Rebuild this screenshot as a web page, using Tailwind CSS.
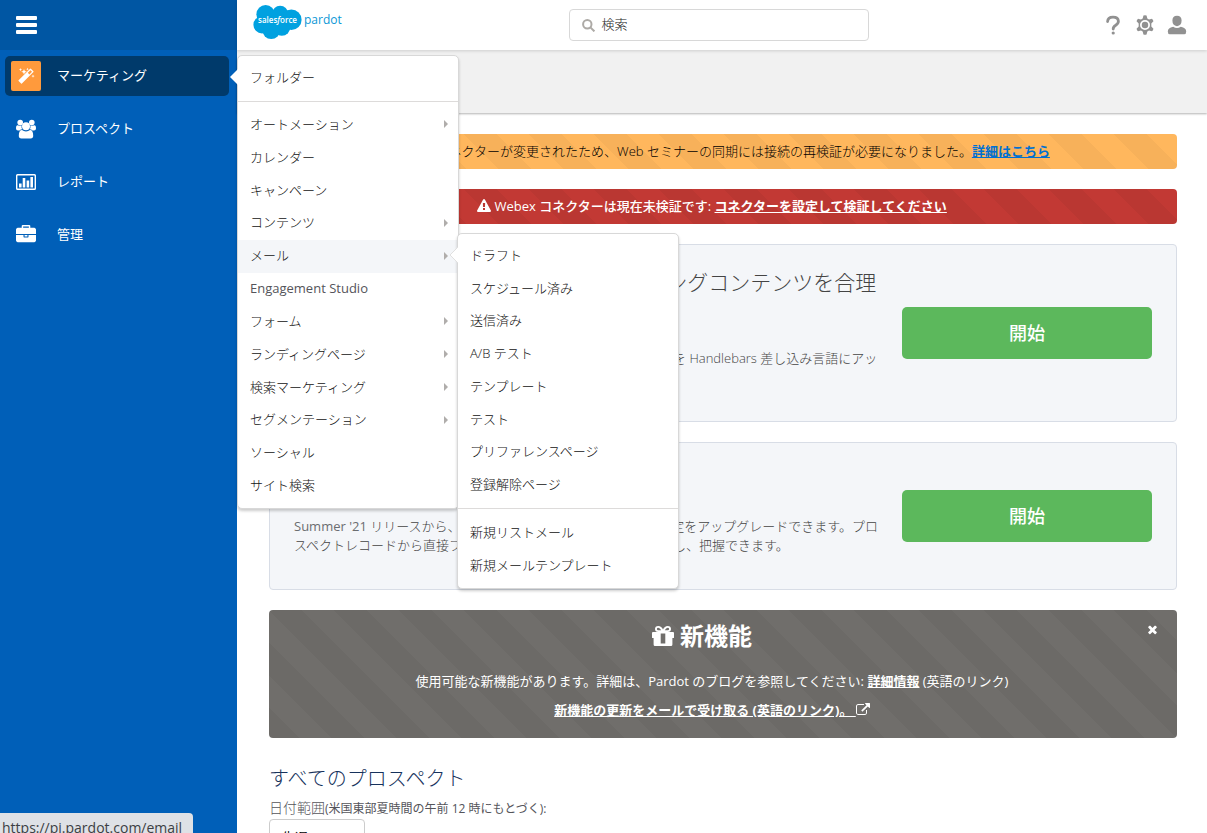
<!DOCTYPE html>
<html lang="ja">
<head>
<meta charset="utf-8">
<meta name="viewport" content="width=device-width, initial-scale=1">
<title>Pardot</title>
<script src="https://cdn.jsdelivr.net/npm/@tailwindcss/browser@4"></script>
</head>
<body class="relative flex h-screen overflow-hidden bg-white font-['Open_Sans','Noto_Sans_CJK_JP',sans-serif] text-[13px] leading-[19px] text-[#3e3e3c]">

<!-- Sidebar -->
<nav class="flex w-[237px] shrink-0 flex-col bg-[#005fb8] text-white" aria-label="メイン">
  <div class="flex h-[50px] items-center bg-[#0056a3] pl-4">
    <button type="button" aria-label="メニュー">
      <svg class="h-[18px] w-[21px]" viewBox="0 0 21 18" fill="currentColor"><rect width="21" height="4" rx="1"/><rect y="7" width="21" height="4" rx="1"/><rect y="14" width="21" height="4" rx="1"/></svg>
    </button>
  </div>
  <ul class="flex flex-col gap-[13px] py-1.5 pr-2 pl-[5px] [&_b]:pb-0.5 [&_b]:font-normal">
    <li><a href="#" class="flex h-10 items-center gap-4 rounded-[5px] bg-[#003a6b] pl-1.5">
      <span class="flex size-[30px] items-center justify-center rounded-xs bg-[#ff9a3c]">
        <svg class="h-[18px] w-[18px]" viewBox="0 0 18 18" fill="currentColor"><path fill-rule="evenodd" d="M13.9 1.800 16.400 4.300Q16.800 4.700 16.400 5.100L4.900 16.600Q4.500 17 4.100 16.600L1.600 14.100Q1.200 13.700 1.600 13.300L13.100 1.800Q13.500 1.400 13.900 1.800zM13.400 3.200 10.800 5.800 12.400 7.400 15 4.800z"/><path d="M3.500 1l.5 1.200 1.200.4-1.200.5-.5 1.200-.5-1.200-1.200-.5L3 2.200zM7 2l.8 2 2 .8-2 .8L7 7.500l-.8-1.900-2-.8 2-.8zM10.500.8l.4 1 1 .4-1 .4-.4 1-.4-1-1-.4 1-.4zM16 7.500l.5 1.200 1.200.4-1.200.5-.5 1.200-.5-1.200-1.200-.5 1.200-.4z"/></svg>
      </span>
      <b>マーケティング</b></a></li>
    <li><a href="#" class="flex h-10 items-center gap-[21px] pl-[11px]">
      <svg class="h-5 w-5" viewBox="0 0 20 20" fill="currentColor"><circle cx="4.200" cy="3.600" r="2.800"/><circle cx="15.800" cy="3.600" r="2.800"/><path d="M0 9.500Q0 6.300 1.600 6.300L4 7.100 5.600 6.600Q5.200 9 6.300 10.200 4.600 10.300 3.600 11.400H2Q0 11.400 0 9.500zM20 9.500Q20 6.300 18.400 6.300L16 7.100 14.400 6.600Q14.800 9 13.700 10.200 15.400 10.300 16.400 11.400H18Q20 11.400 20 9.500z"/><circle cx="10" cy="7.200" r="4"/><path d="M2.800 16.800Q2.800 11 6 11 7.700 12.400 10 12.400T14 11Q17.200 11 17.200 16.800 17.200 19.400 14.600 19.400H5.400Q2.800 19.400 2.800 16.800z"/></svg>
      <b>プロスペクト</b></a></li>
    <li><a href="#" class="flex h-10 items-center gap-[21px] pl-[11px]">
      <svg class="h-5 w-5" viewBox="0 0 20 20" fill="currentColor"><path fill-rule="evenodd" d="M1.500 2h17Q20 2 20 3.500v13q0 1.500-1.500 1.500h-17Q0 18 0 16.500v-13Q0 2 1.500 2zm.3 1.400q-.4 0-.4.400v12.400q0 .4.400.4h16.400q.4 0 .4-.4V3.800q0-.4-.4-.4z"/><path d="M3 11.500h2.600V15.500H3zM6.700 6h2.600v9.500H6.700zM10.600 8.500h2.600v7h-2.600zM14.400 5H17v10.500h-2.600z"/></svg>
      <b>レポート</b></a></li>
    <li><a href="#" class="flex h-10 items-center gap-[21px] pl-[11px]">
      <svg class="h-5 w-5" viewBox="0 0 1792 1792" fill="currentColor"><path d="M640 256h512v-128h-512v128zm1152 640v480q0 66-47 113t-113 47h-1472q-66 0-113-47t-47-113v-480h672v160q0 26 19 45t45 19h320q26 0 45-19t19-45v-160h672zm-768 0v128h-256v-128h256zm768-480v384h-1792v-384q0-66 47-113t113-47h352v-160q0-40 28-68t68-28h576q40 0 68 28t28 68v160h352q66 0 113 47t47 113z"/></svg>
      <b>管理</b></a></li>
  </ul>
</nav>

<div class="flex min-w-0 flex-1 flex-col">
  <!-- Top bar -->
  <header class="relative z-10 flex h-[50px] shrink-0 items-center justify-between bg-white pr-5 pl-4 shadow-[0_1px_3px_rgba(0,0,0,0.15)]">
    <a href="#" class="flex h-full gap-[2px] pt-[5px]" aria-label="salesforce pardot">
      <span class="relative flex h-[34px] w-[49px] items-center justify-center">
        <svg class="absolute inset-0 h-full w-full" viewBox="0 0 146 103" fill="#00a1e0"><circle cx="37" cy="28" r="28"/><circle cx="81" cy="26" r="24"/><circle cx="115" cy="45" r="31"/><circle cx="26" cy="60" r="26"/><circle cx="54" cy="76" r="27"/><circle cx="86" cy="67" r="26"/><path d="M30 25h70v45H30z"/></svg>
        <span class="relative -mt-1 text-[8px] leading-3 font-semibold text-white">sales<i>f</i>orce</span>
      </span>
      <span class="pt-[7px] text-[12px] leading-4 text-[#0c97d6]">pardot</span>
    </a>
    <label class="flex h-8 w-[300px] items-center gap-1.5 rounded border border-[#d8d8d8] bg-white px-3">
      <svg class="h-[13px] w-[13px] shrink-0" viewBox="0 0 13 13" fill="none" stroke="#adaaa6" stroke-width="2"><circle cx="5.300" cy="5.300" r="4.200"/><path d="M8.400 8.400 12.400 12.400"/></svg>
      <input type="text" aria-label="検索" placeholder="検索" class="min-w-0 flex-1 bg-transparent pb-0.5 font-light outline-none placeholder:text-[#222]">
    </label>
    <div class="flex items-center gap-3 pl-[6px] text-[#919191]">
      <button type="button" aria-label="ヘルプ"><svg class="size-5" viewBox="0 0 20 20" fill="none" stroke="currentColor" stroke-width="2.800"><path d="M4.600 6.500Q4.800 2.200 10 2.200T15.400 6.300Q15.400 8.500 12.700 10.200 10.200 11.600 10.200 14" stroke-linecap="round"/><circle cx="10.200" cy="18" r="1.600" fill="currentColor" stroke="none"/></svg></button>
      <button type="button" aria-label="設定"><svg class="size-5" viewBox="1 1 18 18" fill="currentColor"><path fill-rule="evenodd" d="M8.600 1.500Q10 1 11.400 1.500l.7 2.600 1.500.9 2.700-.6q1 .9 1.300 2.300l-1.900 1.900v2.800l1.900 1.900q-.3 1.400-1.300 2.300l-2.700-.6-1.500.9-.7 2.600q-1.400.5-2.800 0l-.7-2.600-1.500-.9-2.700.6q-1-.9-1.300-2.300l1.900-1.900V8.600L2.400 6.700Q2.700 5.300 3.700 4.400l2.700.6 1.500-.9zM10 5.500a4.500 4.500 0 1 0 0 9 4.500 4.500 0 0 0 0-9z"/><circle cx="10" cy="10" r="2.900"/></svg></button>
      <button type="button" aria-label="ユーザー"><svg class="size-5" viewBox="0 0 20 20" fill="currentColor"><path d="M10 .8q4.600 0 4.600 4.700 0 5-4.600 5.700-4.600-.7-4.600-5.700Q5.400.8 10 .8zM.8 16.500q0-3.600 5.400-4.700Q8 13 10 13t3.800-1.200q5.400 1.100 5.400 4.700 0 2.700-2 2.700H2.800q-2 0-2-2.700z"/></svg></button>
    </div>
  </header>

  <div class="h-[63px] shrink-0 bg-[#f1f1f1] shadow-[0_1px_2px_rgba(0,0,0,0.3)]"></div>

  <main class="flex flex-col gap-5 pt-[21px] pr-[30px] pl-8">
    <p class="rounded bg-[#ffb75d] bg-[linear-gradient(45deg,rgba(0,0,0,0.03)_25%,transparent_25%,transparent_50%,rgba(0,0,0,0.03)_50%,rgba(0,0,0,0.03)_75%,transparent_75%)] bg-[length:65px_65px] py-2 pr-1 text-center font-light text-black">Webex コネクターが変更されたため、Web セミナーの同期には接続の再検証が必要になりました。<a href="#" class="font-bold text-[#0070d2] underline">詳細はこちら</a></p>

    <p class="rounded bg-[#c23934] bg-[linear-gradient(45deg,rgba(0,0,0,0.04)_25%,transparent_25%,transparent_50%,rgba(0,0,0,0.04)_50%,rgba(0,0,0,0.04)_75%,transparent_75%)] bg-[length:65px_65px] py-2 pr-[22px] text-center font-medium text-white"><svg class="inline size-[14px] align-[-2px]" viewBox="0 0 1792 1792" fill="currentColor"><path d="M1024 1375v-190q0-14-9.500-23.500t-22.500-9.500h-192q-13 0-22.500 9.500t-9.500 23.500v190q0 14 9.500 23.500t22.500 9.500h192q13 0 22.500-9.500t9.500-23.500zm-2-374l18-459q0-12-10-19-13-11-24-11h-220q-11 0-24 11-10 7-10 21l17 457q0 10 10 16.500t24 6.500h185q14 0 23.500-6.500t10.500-16.500zm-14-934l768 1408q35 63-2 126-17 29-46.500 46t-63.500 17h-1536q-34 0-63.500-17t-46.500-46q-37-63-2-126l768-1408q17-31 47-49t65-18 65 18 47 49z"/></svg> Webex コネクターは現在未検証です: <a href="#" class="font-bold underline">コネクターを設定して検証してください</a></p>

    <section class="flex items-center gap-[22px] rounded border border-[#d8dde6] bg-[#f4f6f9] pr-6 pl-6 font-light text-[#444]">
      <div class="min-w-0 flex-1 pt-[22px] pb-[34px]">
        <h2 class="mb-[22px] text-[21px] leading-[30px]">Handlebars 差し込みHML でマーケティングコンテンツを合理<br>化する</h2>
        <p>Pardot の差し込み項目をより柔軟に活用できます。変数の各タグを Handlebars 差し込み言語にアッ<br>プグレードしてください。</p>
      </div>
      <button type="button" class="h-[52px] w-[250px] shrink-0 rounded-[5px] bg-[#5cb85c] text-[18px] font-medium text-white">開始</button>
    </section>

    <section class="flex items-center gap-[22px] rounded border border-[#d8dde6] bg-[#f4f6f9] pr-6 pl-6 font-light text-[#444]">
      <div class="min-w-0 flex-1 pt-[22px] pb-[34px]">
        <h2 class="mb-[22px] text-[21px] leading-[30px]">メール設定のアップグレード</h2>
        <p><span class="font-normal text-[#6b6d70]">Summer '21</span> リリースから、 新しいメール環境を使って送信の設定をアップグレードできます。プロ<br>スペクトレコードから直接フォローアップの メールを簡単に送信し、把握できます。</p>
      </div>
      <button type="button" class="h-[52px] w-[250px] shrink-0 rounded-[5px] bg-[#5cb85c] text-[18px] font-medium text-white">開始</button>
    </section>

    <section class="relative rounded bg-[#706e6b] bg-[linear-gradient(45deg,rgba(0,0,0,0.04)_25%,transparent_25%,transparent_50%,rgba(0,0,0,0.04)_50%,rgba(0,0,0,0.04)_75%,transparent_75%)] bg-[length:65px_65px] pt-2 pr-[22px] pb-[18px] text-center text-white">
      <button type="button" aria-label="閉じる" class="absolute top-[13px] right-[18px]"><svg class="size-[13px]" viewBox="0 0 1792 1792" fill="currentColor"><path d="M1490 1322q0 40-28 68l-136 136q-28 28-68 28t-68-28l-294-294-294 294q-28 28-68 28t-68-28l-136-136q-28-28-28-68t28-68l294-294-294-294q-28-28-28-68t28-68l136-136q28-28 68-28t68 28l294 294 294-294q28-28 68-28t68 28l136 136q28 28 28 68t-28 68l-294 294 294 294q28 28 28 68z"/></svg></button>
      <h2 class="mb-[18px] flex items-center justify-center gap-1.5 pr-5 text-[24px] leading-9 font-bold">
        <svg class="h-5 w-[22px]" viewBox="0 0 22 20" fill="currentColor"><path fill-rule="evenodd" d="M11 3.500Q9.500 0 6.300 0 3 0 3 3T6.300 6H1Q0 6 0 7v4.500q0 .6.6.6H1.600V18.500Q1.600 20 3 20h16q1.400 0 1.400-1.500v-6.400h1q.6 0 .6-.6V7q0-1-1-1h-5.300Q19 6 19 3t-3.300-3Q12.500 0 11 3.500zM6.300 1.800Q8 1.800 9.200 4.300H6.300Q4.900 4.300 4.900 3t1.400-1.200zM15.700 1.800q1.400 0 1.400 1.200t-1.400 1.300h-2.900Q14 1.800 15.700 1.800zM8.700 7.500h4.600v10H8.700z"/></svg>
        新機能</h2>
      <p class="mb-2.5">使用可能な新機能があります。詳細は、Pardot のブログを参照してください: <a href="#" class="font-bold underline">詳細情報</a> (英語のリンク)</p>
      <p><a href="#" class="font-bold underline">新機能の更新をメールで受け取る (英語のリンク)。 <svg class="inline size-[14px] align-[-2px]" viewBox="0 0 1792 1792" fill="currentColor"><path d="M1408 928v320q0 119-84.500 203.500t-203.500 84.500h-832q-119 0-203.500-84.500t-84.500-203.500v-832q0-119 84.500-203.500t203.500-84.500h704q14 0 23 9t9 23v64q0 14-9 23t-23 9h-704q-66 0-113 47t-47 113v832q0 66 47 113t113 47h832q66 0 113-47t47-113v-320q0-14 9-23t23-9h64q14 0 23 9t9 23zm384-864v512q0 26-19 45t-45 19-45-19l-176-176-652 652q-10 10-23 10t-23-10l-114-114q-10-10-10-23t10-23l652-652-176-176q-19-19-19-45t19-45 45-19h512q26 0 45 19t19 45z"/></svg></a></p>
    </section>

    <section class="pt-1.5">
      <h2 class="mb-1 text-[20px] leading-[30px] font-light text-[#16325c]">すべてのプロスペクト</h2>
      <label for="range" class="block text-[#54545a]"><span class="text-[14px] font-light">日付範囲</span><span class="text-[12px]">(米国東部夏時間の午前 12 時にもとづく):</span></label>
      <select id="range" class="mt-px h-8 w-24 appearance-none rounded border border-[#ccc] bg-white px-3 pt-1 text-black"><option>先週</option></select>
    </section>
  </main>
</div>

<!-- Marketing menu -->
<div class="absolute top-[55px] left-[237px] z-20 w-[222px] rounded-[5px] border border-[#d8d8d8] bg-white pb-[5px] font-light text-[#111] shadow-[0_2px_3px_rgba(0,0,0,0.2)]">
  <svg class="absolute top-[13px] -left-2 h-4 w-2" viewBox="0 0 8 16" fill="#fff"><path d="M8 0v16L0 8z"/></svg>
  <a href="#" class="flex h-[46px] items-center border-b border-[#dddbda] px-3 pb-0.5">フォルダー</a>
  <ul class="mt-[7px] grid h-[394px] grid-rows-12 [&_a]:flex [&_a]:h-full [&_a]:items-center [&_a]:justify-between [&_a]:pr-2.5 [&_a]:pb-0.5 [&_a]:pl-3 [&_svg]:h-2 [&_svg]:w-1 [&_svg]:fill-[#b0adab]">
    <li><a href="#">オートメーション<svg viewBox="0 0 4 8"><path d="M0 0v8l4-4z"/></svg></a></li>
    <li><a href="#">カレンダー</a></li>
    <li><a href="#">キャンペーン</a></li>
    <li><a href="#">コンテンツ<svg viewBox="0 0 4 8"><path d="M0 0v8l4-4z"/></svg></a></li>
    <li class="bg-[#f4f6f9]"><a href="#">メール<svg viewBox="0 0 4 8"><path d="M0 0v8l4-4z"/></svg></a></li>
    <li class="font-normal text-[#54545a]"><a href="#">Engagement Studio</a></li>
    <li><a href="#">フォーム<svg viewBox="0 0 4 8"><path d="M0 0v8l4-4z"/></svg></a></li>
    <li><a href="#">ランディングページ<svg viewBox="0 0 4 8"><path d="M0 0v8l4-4z"/></svg></a></li>
    <li><a href="#">検索マーケティング<svg viewBox="0 0 4 8"><path d="M0 0v8l4-4z"/></svg></a></li>
    <li><a href="#">セグメンテーション<svg viewBox="0 0 4 8"><path d="M0 0v8l4-4z"/></svg></a></li>
    <li><a href="#">ソーシャル</a></li>
    <li><a href="#">サイト検索</a></li>
  </ul>
</div>

<!-- Mail submenu -->
<div class="absolute top-[233px] left-[457px] z-30 w-[222px] rounded-[5px] border border-[#d8d8d8] bg-white pt-[5px] pb-[6px] font-light text-[#111] shadow-[0_2px_3px_rgba(0,0,0,0.2)]">
  <svg class="absolute top-[13px] -left-2 h-4 w-2" viewBox="0 0 8 16" fill="#fff"><path d="M8 0v16L0 8z"/><path d="M8 0 0 8l8 8" fill="none" stroke="#e0e0e0"/></svg>
  <ul class="grid h-[262px] grid-rows-8 [&_a]:flex [&_a]:h-full [&_a]:items-center [&_a]:px-3">
    <li><a href="#">ドラフト</a></li>
    <li><a href="#">スケジュール済み</a></li>
    <li><a href="#">送信済み</a></li>
    <li><a href="#">A/B テスト</a></li>
    <li><a href="#">テンプレート</a></li>
    <li><a href="#">テスト</a></li>
    <li><a href="#">プリファレンスページ</a></li>
    <li><a href="#">登録解除ページ</a></li>
  </ul>
  <ul class="mt-[7px] border-t border-[#dddbda] pt-[7px] [&_a]:flex [&_a]:h-[33px] [&_a]:items-center [&_a]:px-3">
    <li><a href="#">新規リストメール</a></li>
    <li><a href="#">新規メールテンプレート</a></li>
  </ul>
</div>

<!-- Link address bubble -->
<div class="absolute bottom-0 left-0 z-40 h-5 overflow-hidden rounded-tr bg-[#dee1e6] pr-[11px] pl-0.5 text-[14px] leading-[30px] text-[#3c4043]">https://pi.pardot.com/email</div>
</body>
</html>
